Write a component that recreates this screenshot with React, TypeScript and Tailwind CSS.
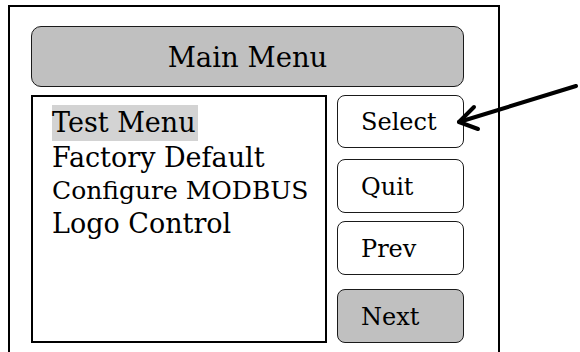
const serif = { fontFamily: '"DejaVu Serif", "Liberation Serif", serif' }

const buttons = [
  { label: 'Select', cls: 'h-[53px] bg-white' },
  { label: 'Quit', cls: 'mt-[11px] h-[54px] bg-white' },
  { label: 'Prev', cls: 'mt-[8px] h-[54px] bg-white' },
  { label: 'Next', cls: 'mt-[14px] h-[54px] bg-[#c0c0c0]' },
]

function Arrow() {
  return (
    <svg className="pointer-events-none absolute left-0 top-0" width="580" height="352" viewBox="0 0 580 352">
      <g stroke="#000" strokeWidth="4" fill="none" strokeLinecap="round" strokeLinejoin="round">
        <line x1="576" y1="86" x2="459" y2="122" />
        <polyline points="474,107 459,122 478,129" />
      </g>
    </svg>
  )
}

export default function App() {
  return (
    <div className="relative h-[352px] w-[580px] overflow-hidden bg-white text-black" style={serif}>
      <div className="ml-[8px] mt-[5px] h-[380px] w-[492px] border-2 border-black pl-[21px] pt-[19px]">
        <div className="flex h-[61px] w-[433px] items-center justify-center rounded-[10px] border-[1.5px] border-[#1a1a1a] bg-[#c0c0c0] pt-[2px] text-[27.5px]">
          Main Menu
        </div>
        <div className="mt-[8px] flex gap-[10px]">
          <div className="h-[248px] w-[296px] border-2 border-black pl-[19px] pt-[8px]">
            <span className="inline-block h-[36px] bg-[#d3d3d3] pr-[2px] text-[27px] leading-[36px]">Test Menu</span>
            <div className="h-[34px] text-[27px] leading-[34px]">Factory Default</div>
            <div className="h-[32px] text-[25px] leading-[32px]">Configure MODBUS</div>
            <div className="h-[34px] text-[27px] leading-[34px]">Logo Control</div>
          </div>
          <div className="flex w-[127px] flex-col">
            {buttons.map((b) => (
              <div
                key={b.label}
                className={`flex items-center rounded-[8px] border-[1.5px] border-[#1a1a1a] pl-[23px] pt-[1px] text-[24px] ${b.cls}`}
              >
                {b.label}
              </div>
            ))}
          </div>
        </div>
      </div>
      <Arrow />
    </div>
  )
}
